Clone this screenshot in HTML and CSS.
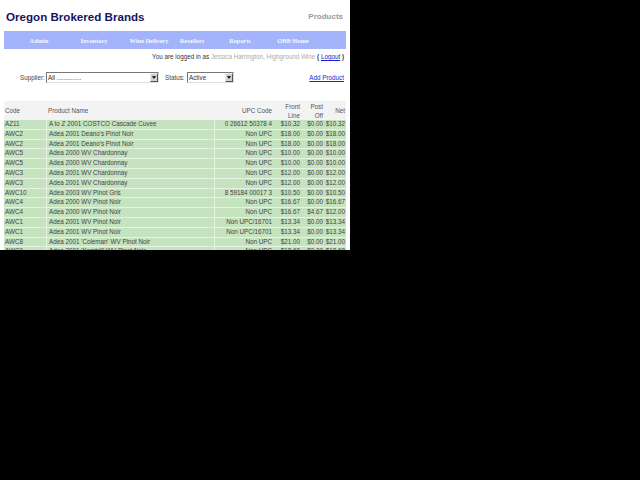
FILE: index.html
```html
<!DOCTYPE html>
<html lang="en">
<head>
<meta charset="utf-8">
<title>Products</title>
<link rel="stylesheet" href="styles.css">
</head>
<body>
<div class="page">
  <header class="head">
    <h1 class="brand">Oregon Brokered Brands</h1>
    <div class="section">Products</div>
  </header>
  <nav class="nav">
    <a class="n1">Admin</a><a class="n2">Inventory</a><a class="n3">Wine Delivery</a><a class="n4">Retailers</a><a class="n5">Reports</a><a class="n6">OBB Home</a>
  </nav>
  <div class="login">You are logged in as <span class="who">Jessica Harrington, Highground Wine</span> <b>(</b> <a href="#">Logout</a> <b>)</b></div>
  <form class="filters">
    <label class="lab">Supplier:</label>
    <span class="sel sel-sup"><select><option>All ..............</option></select><i class="arrow"><svg width="7" height="7" viewBox="0 0 7 7"><path d="M1 2h5L3.5 5z" fill="#000"/></svg></i></span>
    <label class="lab lab2">Status:</label>
    <span class="sel sel-st"><select><option>Active</option></select><i class="arrow"><svg width="7" height="7" viewBox="0 0 7 7"><path d="M1 2h5L3.5 5z" fill="#000"/></svg></i></span>
    <a class="add" href="#">Add Product</a>
  </form>
  <table class="grid">
    <colgroup><col class="c1"><col class="c2"><col class="c3"><col class="c4"><col class="c5"><col class="c6"></colgroup>
    <thead><tr><th class="l">Code</th><th class="l">Product Name</th><th>UPC Code</th><th>Front<br>Line</th><th>Post<br>Off</th><th>Net</th></tr></thead>
    <tbody>
      <tr><td>AZ11</td><td>A to Z 2001 COSTCO Cascade Cuvee</td><td class="r">0 26612 50378 4</td><td class="r">$10.32</td><td class="r">$0.00</td><td class="r">$10.32</td></tr>
      <tr><td>AWC2</td><td>Adea 2001 Deano's Pinot Noir</td><td class="r">Non UPC</td><td class="r">$18.00</td><td class="r">$0.00</td><td class="r">$18.00</td></tr>
      <tr><td>AWC2</td><td>Adea 2001 Deano's Pinot Noir</td><td class="r">Non UPC</td><td class="r">$18.00</td><td class="r">$0.00</td><td class="r">$18.00</td></tr>
      <tr><td>AWC5</td><td>Adea 2000 WV Chardonnay</td><td class="r">Non UPC</td><td class="r">$10.00</td><td class="r">$0.00</td><td class="r">$10.00</td></tr>
      <tr><td>AWC5</td><td>Adea 2000 WV Chardonnay</td><td class="r">Non UPC</td><td class="r">$10.00</td><td class="r">$0.00</td><td class="r">$10.00</td></tr>
      <tr><td>AWC3</td><td>Adea 2001 WV Chardonnay</td><td class="r">Non UPC</td><td class="r">$12.00</td><td class="r">$0.00</td><td class="r">$12.00</td></tr>
      <tr><td>AWC3</td><td>Adea 2001 WV Chardonnay</td><td class="r">Non UPC</td><td class="r">$12.00</td><td class="r">$0.00</td><td class="r">$12.00</td></tr>
      <tr><td>AWC10</td><td>Adea 2003 WV Pinot Gris</td><td class="r">8 59184 00017 3</td><td class="r">$10.50</td><td class="r">$0.00</td><td class="r">$10.50</td></tr>
      <tr><td>AWC4</td><td>Adea 2000 WV Pinot Noir</td><td class="r">Non UPC</td><td class="r">$16.67</td><td class="r">$0.00</td><td class="r">$16.67</td></tr>
      <tr><td>AWC4</td><td>Adea 2000 WV Pinot Noir</td><td class="r">Non UPC</td><td class="r">$16.67</td><td class="r">$4.67</td><td class="r">$12.00</td></tr>
      <tr><td>AWC1</td><td>Adea 2001 WV Pinot Noir</td><td class="r">Non UPC/16701</td><td class="r">$13.34</td><td class="r">$0.00</td><td class="r">$13.34</td></tr>
      <tr><td>AWC1</td><td>Adea 2001 WV Pinot Noir</td><td class="r">Non UPC/16701</td><td class="r">$13.34</td><td class="r">$0.00</td><td class="r">$13.34</td></tr>
      <tr><td>AWC8</td><td>Adea 2001 'Coleman' WV Pinot Noir</td><td class="r">Non UPC</td><td class="r">$21.00</td><td class="r">$0.00</td><td class="r">$21.00</td></tr>
      <tr><td>AWC9</td><td>Adea 2001 'Kambill' WV Pinot Noir</td><td class="r">Non UPC</td><td class="r">$18.68</td><td class="r">$0.00</td><td class="r">$18.68</td></tr>
    </tbody>
  </table>
</div>
</body>
</html>
```
FILE: styles.css
```css
html, body { margin: 0; height: 100%; background: #000; }
.page {
  width: 350px; height: 250px; overflow: hidden; background: #fff;
  font-family: "Liberation Sans", Arial, sans-serif; font-size: 6.3px; color: #444;
}
.head { display: flex; justify-content: space-between; align-items: center; height: 31px; padding: 1px 7px 0 6px; box-sizing: border-box; }
.brand { margin: 0; font-size: 11.6px; font-weight: bold; color: #14145f; }
.section { font-size: 8px; font-weight: bold; color: #999; }
.nav { display: flex; height: 18px; margin: 0 4px; background: #a3b4fc; align-items: center; font-size: 6.4px; font-weight: bold; color: #f4f6ff; font-family: "Liberation Serif", serif; }
.nav a { display: block; text-align: center; }
.n1 { width: 70px; }
.n2 { width: 40px; }
.n3 { width: 48px; margin-left: 11px; }
.n4 { width: 38px; }
.n5 { width: 58px; }
.n6 { width: 48px; }
.login { text-align: right; padding: 4px 6px 0 0; height: 11px; color: #333; }
.who { color: #aaa; }
.login a, .add { color: #22c; text-decoration: underline; }
.filters { display: flex; align-items: center; height: 11px; margin-top: 8px; padding: 0 6px 0 20px; }
.lab { width: 26px; }
.lab2 { width: 22px; margin-left: 6px; }
.sel { position: relative; display: block; height: 11px; box-sizing: border-box; border: 1px solid #777; border-right-color: #ddd; border-bottom-color: #ddd; background: #fff; }
.sel select { appearance: none; -webkit-appearance: none; border: 0; background: transparent; display: block; width: 100%; height: 9px; padding: 0 0 0 1px; margin: 0; font: 6.3px "Liberation Sans", Arial, sans-serif; color: #333; }
.sel-sup { width: 113px; }
.sel-st { width: 47px; }
.arrow { position: absolute; right: 0; top: 0; width: 8px; height: 9px; background: #d4d0c8; display: flex; align-items: center; justify-content: center; box-sizing: border-box; border: 1px solid; border-color: #eee #555 #555 #eee; }
.add { margin-left: auto; }
.grid { width: 342px; margin: 18px 0 0 4px; border-collapse: separate; border-spacing: 0; table-layout: fixed; }
.c1 { width: 42px; } .c2 { width: 168px; } .c3 { width: 59px; } .c4 { width: 28px; } .c5 { width: 23px; } .c6 { width: 22px; }
.grid th { background: #f3f3f3; font-weight: normal; text-align: right; line-height: 9px; padding: 0 1px; height: 19px; vertical-align: middle; color: #555; }
.grid th.l { text-align: left; }
.grid th:nth-child(2), .grid td:nth-child(2) { padding-left: 2px; }
.grid td { background: #c6e3c0; height: 8.8px; line-height: 8.8px; padding-top: 0; padding-bottom: 0; padding-right: 1px; border-bottom: 1px solid #e6f3e3; white-space: nowrap; color: #444; }
.grid td:not(:nth-child(2)) { padding-left: 1px; }
.grid td.r { text-align: right; }
.grid td:nth-child(2), .grid td:nth-child(3) { border-left: 1px solid #e6f3e3; }
```
